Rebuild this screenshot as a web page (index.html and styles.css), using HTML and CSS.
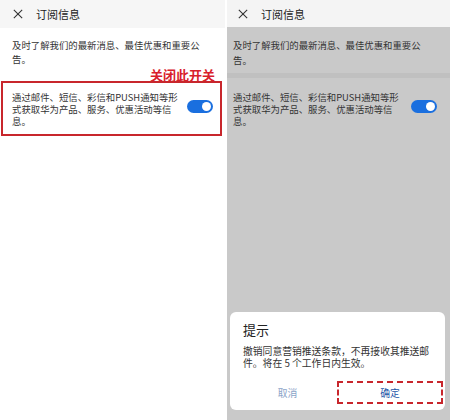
FILE: index.html
```html
<!DOCTYPE html>
<html lang="zh-CN">
  <head>
    <meta charset="UTF-8" />
    <title>订阅信息</title>
    <link rel="stylesheet" href="styles.css">
  </head>
  <body>
    <div class="telas">
      <div class="tela">
        <div class="cabecalho">
          <svg class="fechar" viewBox="0 0 12 12"><path d="M1 1 L11 11 M11 1 L1 11" /></svg>
          <span class="titulo">订阅信息</span>
        </div>
        <div class="conteudo">
          <p class="descricao">及时了解我们的最新消息、最佳优惠和重要公告。</p>
          <div class="dica">关闭此开关</div>
          <div class="item marcado">
            <p>通过邮件、短信、彩信和PUSH通知等形式获取华为产品、服务、优惠活动等信息。</p>
            <div class="chave"><div class="bola"></div></div>
          </div>
        </div>
      </div>

      <div class="tela escura">
        <div class="cabecalho">
          <svg class="fechar" viewBox="0 0 12 12"><path d="M1 1 L11 11 M11 1 L1 11" /></svg>
          <span class="titulo">订阅信息</span>
        </div>
        <div class="conteudo">
          <p class="descricao">及时了解我们的最新消息、最佳优惠和重要公告。</p>
          <div class="separador"></div>
          <div class="item">
            <p>通过邮件、短信、彩信和PUSH通知等形式获取华为产品、服务、优惠活动等信息。</p>
            <div class="chave"><div class="bola"></div></div>
          </div>
        </div>
        <div class="dialogo">
          <div class="dialogoTitulo">提示</div>
          <p class="dialogoTexto">撤销同意营销推送条款，不再接收其推送邮件。将在 5 个工作日内生效。</p>
          <div class="botoes">
            <div class="botao cancelar">取消</div>
            <div class="botao confirmar">确定</div>
          </div>
        </div>
      </div>
    </div>
  </body>
</html>
```

FILE: styles.css
```css
body {
  margin: 0;
  font-family: "Noto Sans CJK SC", "Noto Sans", sans-serif;
  background-color: white;
}
.telas {
  display: flex;
  gap: 2px;
  width: 450px;
  height: 420px;
}
.tela {
  position: relative;
  width: 225px;
  height: 420px;
  background-color: white;
  overflow: hidden;
}
.tela.escura {
  width: 223px;
  background-color: #c9c9c9;
}
.cabecalho {
  display: flex;
  align-items: center;
  height: 28px;
  background-color: #f6f6f6;
  padding-left: 13px;
  box-sizing: border-box;
}
.escura .cabecalho {
  height: 27px;
  padding-left: 11px;
  background-color: #f4f4f4;
}
.fechar {
  width: 10px;
  height: 10px;
  stroke: #333;
  stroke-width: 1.3;
  fill: none;
}
.titulo {
  margin-left: 13px;
  font-size: 11px;
  color: #222;
}
.conteudo {
  display: flex;
  flex-direction: column;
}
.descricao {
  margin: 0;
  padding: 9.5px 0 0 12px;
  width: 190px;
  font-size: 9.4px;
  line-height: 14px;
  color: #333;
}
.escura .descricao {
  padding: 10.5px 0 0 6px;
  line-height: 15px;
}
.dica {
  align-self: flex-end;
  margin: 3px 10px 0 0;
  font-size: 13px;
  font-weight: bold;
  line-height: 12px;
  color: #d8202a;
}
.separador {
  height: 5px;
  margin-top: 5px;
  background-color: #c0c0c0;
}
.item {
  display: flex;
  align-items: center;
  justify-content: space-between;
  padding: 13px 13px 9px 6px;
  height: 58px;
  box-sizing: border-box;
}
.item p {
  margin: 0;
  width: 168px;
  font-size: 9.4px;
  line-height: 12px;
  color: #333;
}
.item .chave {
  margin-bottom: 4px;
}
.item.marcado {
  height: 55px;
  margin: 0 3px 0 1px;
  border: 2px solid #c8262c;
  padding: 8px 7px 7px 9px;
}
.chave {
  display: flex;
  justify-content: flex-end;
  align-items: center;
  width: 26px;
  height: 13px;
  border-radius: 7px;
  background-color: #1a6fdf;
  padding: 0 2px;
  box-sizing: border-box;
}
.bola {
  width: 9px;
  height: 9px;
  border-radius: 50%;
  background-color: white;
}
.dialogo {
  position: absolute;
  left: 3px;
  width: 215px;
  top: 312px;
  height: 98px;
  background-color: white;
  border-radius: 6px;
  padding: 9px 12px 0 13px;
  box-sizing: border-box;
}
.dialogoTitulo {
  font-size: 13px;
  line-height: 18px;
  color: #222;
}
.dialogoTexto {
  margin: 7px 0 0 0;
  font-size: 9.8px;
  line-height: 11.5px;
  color: #333;
}
.botoes {
  display: flex;
  margin: 12px -10px 0 -13px;
  padding-left: 8px;
}
.botao {
  display: flex;
  align-items: center;
  justify-content: center;
  height: 23px;
  font-size: 9.8px;
  color: #1d55a8;
}
.cancelar {
  flex: 1;
  color: #8ba4c8;
}
.confirmar {
  width: 106px;
  border: 2px dashed #c8262c;
  box-sizing: border-box;
}
```
